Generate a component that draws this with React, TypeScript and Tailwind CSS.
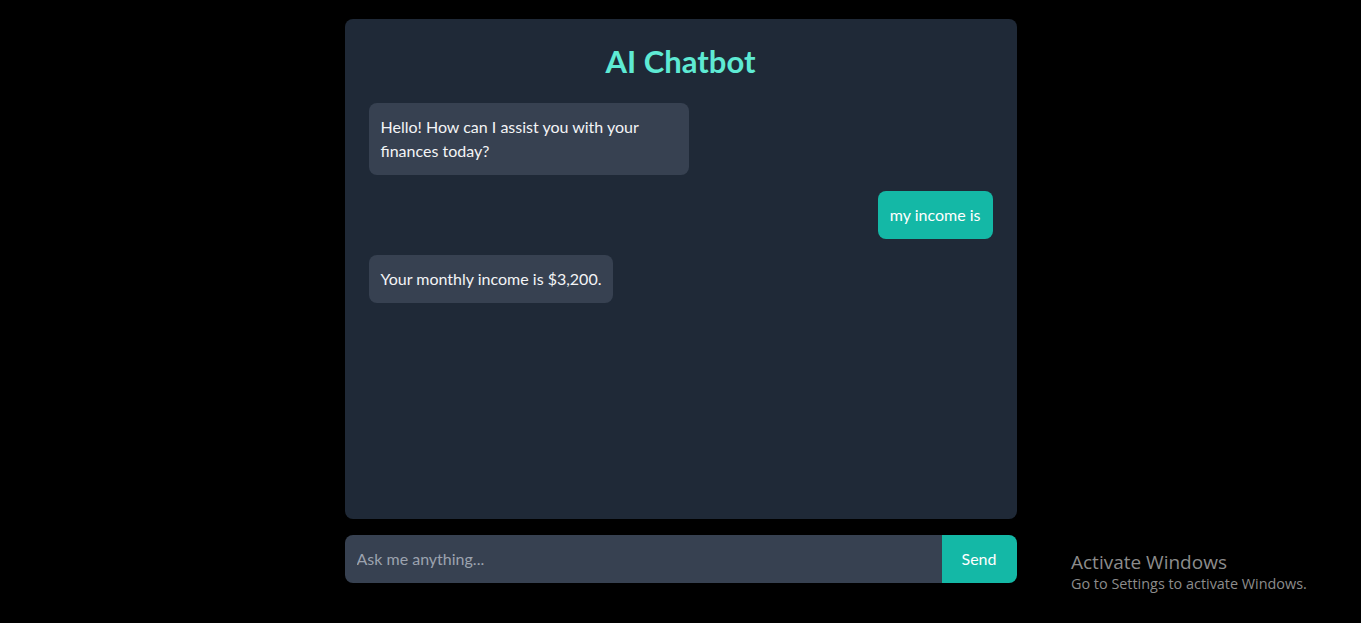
import { useState } from "react";

type Message = { id: number; from: "bot" | "user"; text: string };

const messages: Message[] = [
  { id: 1, from: "bot", text: "Hello! How can I assist you with your finances today?" },
  { id: 2, from: "user", text: "my income is" },
  { id: 3, from: "bot", text: "Your monthly income is $3,200." },
];

export default function App() {
  const [input, setInput] = useState("");

  return (
    <div className="relative min-h-screen bg-black pt-[19px] font-['Lato','Liberation_Sans',sans-serif]">
      <div className="mx-auto w-full max-w-2xl">
        <div className="h-[500px] rounded-lg bg-[#1f2937] p-6">
          <h1 className="mb-6 text-center text-[31px] leading-[36px] font-bold text-[#5eead4]">AI Chatbot</h1>
          <div className="space-y-4">
            {messages.map((m) =>
              m.from === "bot" ? (
                <div key={m.id} className="flex justify-start">
                  <div className="max-w-xs rounded-lg bg-[#374151] px-3 py-3 text-base leading-6 text-[#f3f4f6]">
                    {m.text}
                  </div>
                </div>
              ) : (
                <div key={m.id} className="flex justify-end">
                  <div className="max-w-xs rounded-lg bg-[#14b8a6] px-3 py-3 text-base leading-6 text-white">
                    {m.text}
                  </div>
                </div>
              ),
            )}
          </div>
        </div>

        <div className="mt-4 flex h-12 overflow-hidden rounded-lg">
          <input
            value={input}
            onChange={(e) => setInput(e.target.value)}
            placeholder="Ask me anything..."
            className="min-w-0 flex-1 bg-[#374151] px-3 text-base text-white outline-none placeholder:text-[#9ca3af]"
          />
          <button type="button" className="w-[75px] bg-[#14b8a6] text-base text-white">
            Send
          </button>
        </div>
      </div>

      <div className="absolute left-[1071px] top-[549px] font-['Open_Sans','Liberation_Sans',sans-serif] text-[#8c8c8c]">
        <p className="text-[19px] leading-[26px]">Activate Windows</p>
        <p className="text-[14.4px] leading-[18px]">Go to Settings to activate Windows.</p>
      </div>
    </div>
  );
}
